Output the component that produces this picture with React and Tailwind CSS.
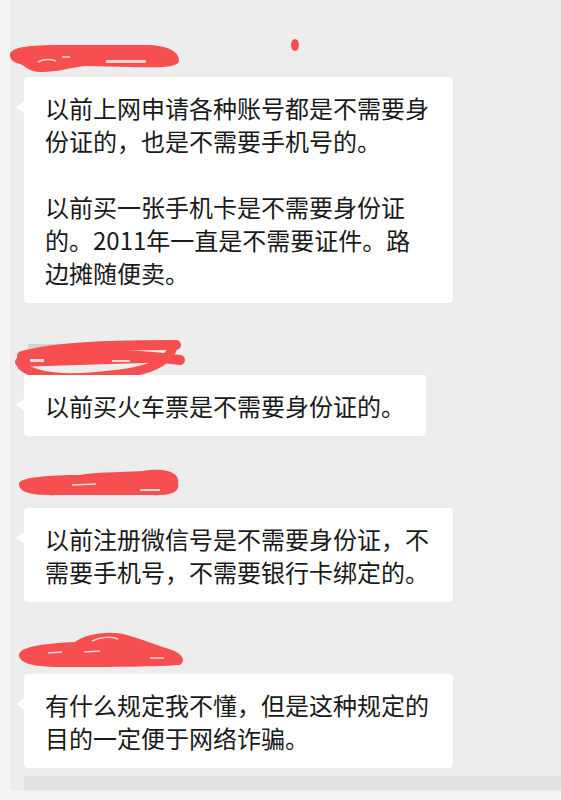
const RED = '#f74f4f'

const MESSAGES = [
  {
    lines: [
      '以前上网申请各种账号都是不需要身份证的，也是不需要手机号的。',
      '以前买一张手机卡是不需要身份证的。2011年一直是不需要证件。路边摊随便卖。',
    ],
    scribble: 'one',
  },
  { lines: ['以前买火车票是不需要身份证的。'], scribble: 'two' },
  { lines: ['以前注册微信号是不需要身份证，不需要手机号，不需要银行卡绑定的。'], scribble: 'three' },
  { lines: ['有什么规定我不懂，但是这种规定的目的一定便于网络诈骗。'], scribble: 'four' },
]

// redacted sender names (red marker over grey nickname); x is page-relative, hence the -24px
function Scribble({ kind }) {
  return (
    <svg width="561" height="72" className="-ml-[24px] block overflow-visible" fill="none">
      {kind === 'one' && (
        <g>
          <path
            d="M10 50 C10 42 30 40 60 40 L150 40 C170 41 179 48 179 55 C179 62 165 63 130 62 L85 61 C68 63 58 67 42 67 C28 67 26 61 20 59 C12 57 10 54 10 50 Z"
            fill={RED}
          />
          <path d="M38 57 C44 54 50 54 56 56" stroke="#f1d0d0" strokeWidth="1.5" />
          <rect x="106" y="55" width="40" height="3" fill="#e6d6d6" />
          <path d="M62 52 L70 52" stroke="#f3dede" strokeWidth="1.5" />
          <ellipse cx="295" cy="40" rx="4" ry="6" fill={RED} />
        </g>
      )}
      {kind === 'two' && (
        <g strokeLinecap="round" stroke={RED}>
          <rect x="28" y="41" width="36" height="5" fill="#d4d4d4" stroke="none" />
          <rect x="108" y="41" width="38" height="5" fill="#d4d4d4" stroke="none" />
          <path d="M22 53 C60 43 120 42 176 42" strokeWidth="10" />
          <path d="M20 59 C60 49 120 49 180 57" strokeWidth="10" />
          <path d="M30 60 L160 56" strokeWidth="7" />
          <path d="M22 63 C40 78 80 76 120 71 C150 67 165 60 172 47" strokeWidth="9" />
          <rect x="30" y="56" width="14" height="3" fill="#e8dede" stroke="none" />
          <rect x="112" y="57" width="18" height="2" fill="#e8dede" stroke="none" />
        </g>
      )}
      {kind === 'three' && (
        <g>
          <path
            d="M19 48 C19 41 50 39 80 39 C100 35 130 37 150 34 C172 32 180 40 178 47 C180 55 174 60 150 59 L60 59 C30 60 19 56 19 48 Z"
            fill={RED}
          />
          <path d="M72 49 L96 48" stroke="#f3dada" strokeWidth="1.5" />
          <rect x="140" y="53" width="20" height="2" fill="#e9dada" />
        </g>
      )}
      {kind === 'four' && (
        <g>
          <path
            d="M19 53 C19 44 50 41 75 40 C85 32 110 28 127 33 C142 37 158 44 172 48 C183 52 186 59 180 63 C150 65 100 65 60 65 C30 65 19 60 19 53 Z"
            fill={RED}
          />
          <path d="M92 39 C100 35 112 34 118 37" stroke="#f3d2d2" strokeWidth="1.5" />
          <path d="M48 51 L62 50 M84 50 L100 49 M150 56 L164 56" stroke="#f0d6d6" strokeWidth="1.5" />
        </g>
      )}
    </svg>
  )
}

function Bubble({ lines }) {
  return (
    <div className="relative w-fit max-w-[429px] rounded-[4px] bg-white px-[21px] py-[14px] text-[24px] leading-[33px] text-[#191919]">
      <span className="absolute left-[-8px] top-[24px] h-0 w-0 border-y-[6px] border-r-[8px] border-y-transparent border-r-white" />
      {lines.map((line, i) => (
        <p key={i} className={i > 0 ? 'mt-[33px]' : ''}>
          {line}
        </p>
      ))}
    </div>
  )
}

export default function App() {
  return (
    <div
      className="flex h-[800px] w-[561px] flex-col overflow-hidden bg-[#f5f5f5]"
      style={{ fontFamily: '"Noto Sans CJK SC", "Noto Sans", sans-serif' }}
    >
      <div className="flex min-h-0 flex-1">
        <div className="w-[10px] shrink-0 bg-[#f5f5f5]" />
        <div className="flex flex-1 flex-col bg-[#ededed] pl-[14px] pt-[5px]">
          {MESSAGES.map((m, i) => (
            <div key={i}>
              <Scribble kind={m.scribble} />
              <Bubble lines={m.lines} />
            </div>
          ))}
          <div className="mt-[8px] h-[14px] rounded-tl-[4px] bg-[#e1e1e1]" />
        </div>
      </div>
      <div className="h-[9px] shrink-0 bg-[#f5f5f5]" />
    </div>
  )
}
